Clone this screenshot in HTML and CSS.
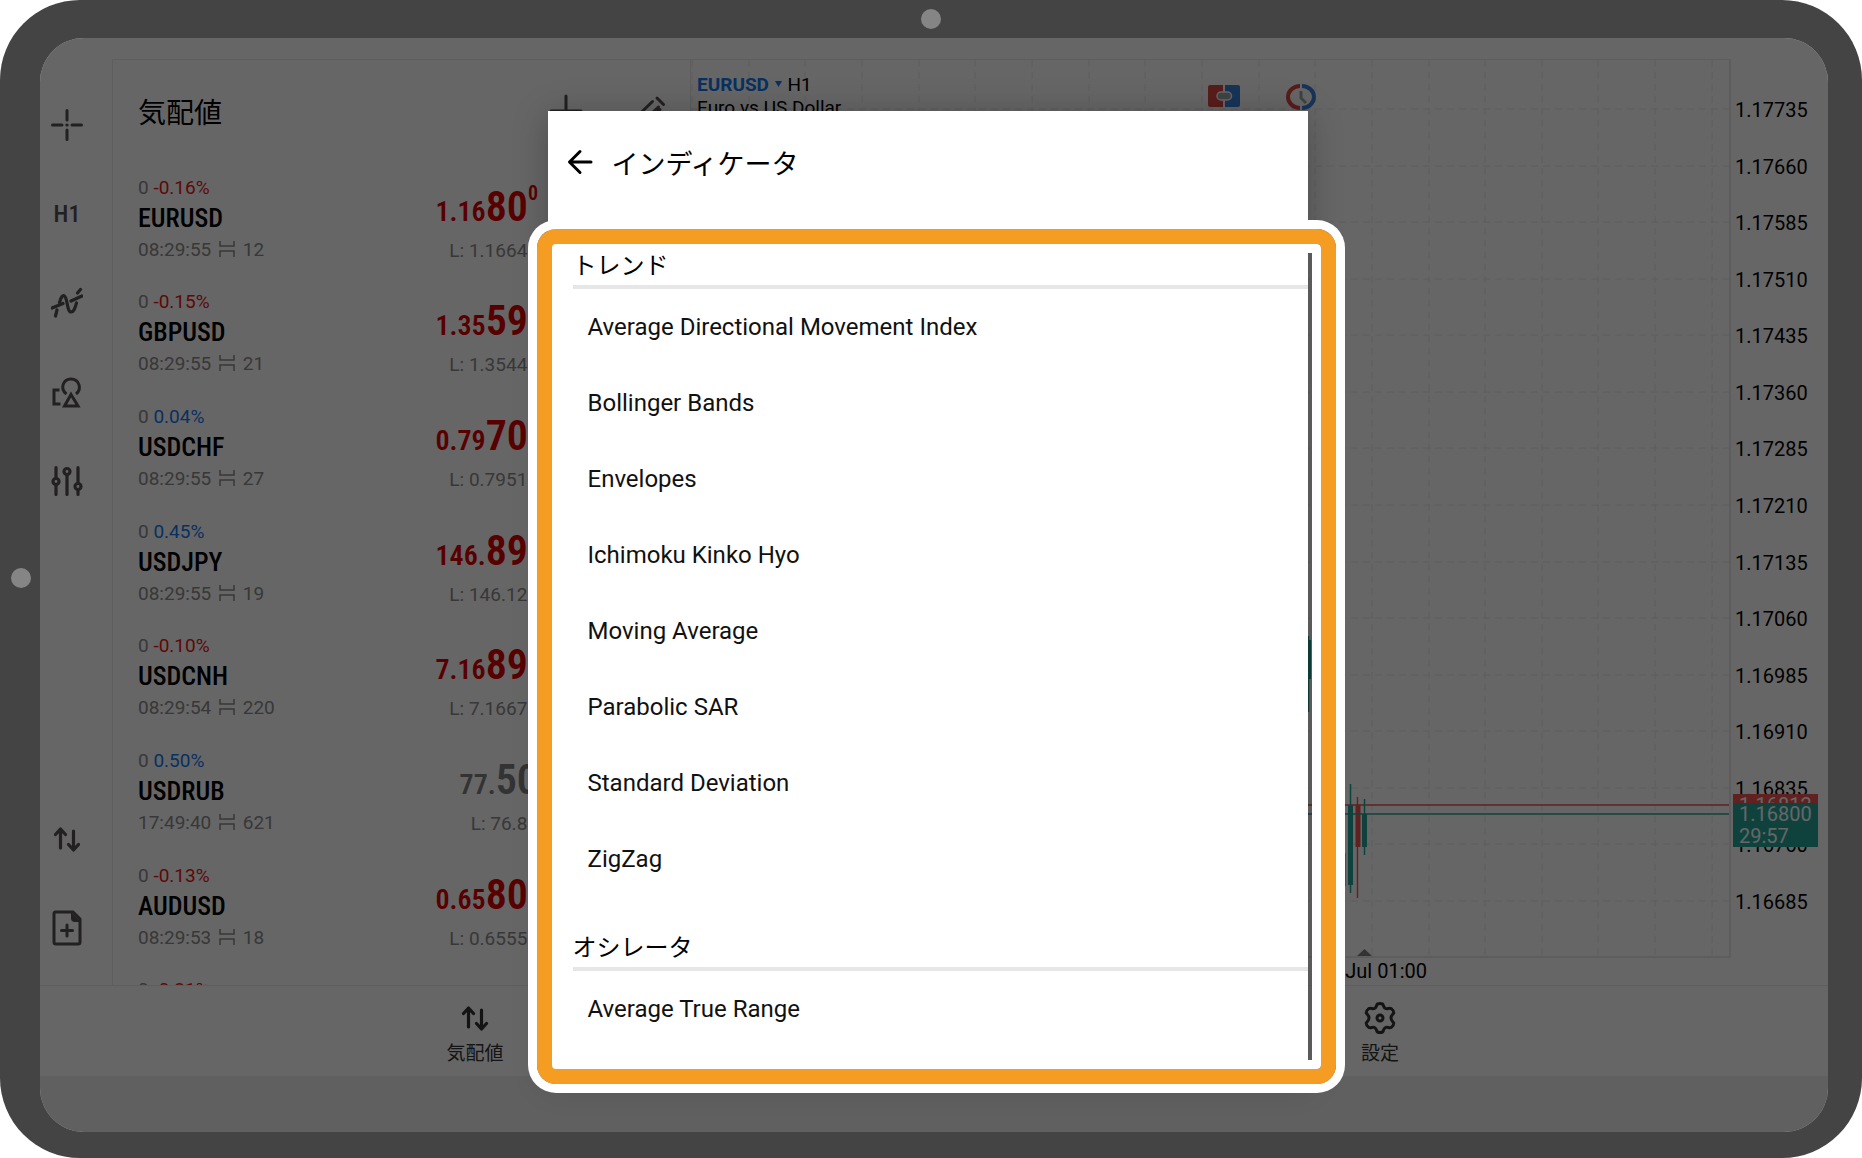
FILE: index.html
```html
<!DOCTYPE html>
<html lang="ja">
<head>
    <meta charset="UTF-8">
    <meta name="viewport" content="width=device-width, initial-scale=1.0">
    <title>インディケータ</title>
    <link rel="stylesheet" href="styles.css">
</head>
<body>

    <!-- 共通アイコン -->
    <svg class="icon-defs" width="0" height="0" aria-hidden="true">
        <symbol id="spread" viewBox="0 0 16 16">
            <path d="M1 0V5H15V0M1 16V10H15V16" fill="none" stroke="currentColor" stroke-width="1.500"/>
        </symbol>
        <symbol id="arrows" viewBox="0 0 32 32">
            <path d="M9.500 25V7M4.500 11.500L9.500 6L14.500 11.500M22.500 8V26M17.500 21.500L22.500 27L27.500 21.500" fill="none" stroke="currentColor" stroke-width="3.200" stroke-linecap="round" stroke-linejoin="round"/>
        </symbol>
    </svg>

    <div class="device">
        <span class="dot dot-top"></span>
        <span class="dot dot-left"></span>

        <div class="screen">
            <main class="main">

                <!-- ツールバー -->
                <div class="toolbar">
                    <button class="tool" aria-label="クロスヘア">
                        <svg class="icon" viewBox="0 0 32 32"><path d="M16 1.500V11M16 21V30.500M1.500 16H11M21 16H30.500M15.800 16H16.200" fill="none" stroke="currentColor" stroke-width="3" stroke-linecap="round"/></svg>
                    </button>
                    <button class="tool tool-text">H1</button>
                    <button class="tool" aria-label="インディケータ">
                        <svg class="icon" viewBox="0 0 32 32"><path d="M1 21L12 16.500M20 14L31 9M4.500 29L6 23M8.500 15.500C10 10 11.500 8 13.500 9C16.500 11 16 25 20 25C23 25 24 21 25.500 16M26.500 6L29.500 2.500" fill="none" stroke="currentColor" stroke-width="3.200" stroke-linecap="round" stroke-linejoin="round"/></svg>
                    </button>
                    <button class="tool" aria-label="オブジェクト">
                        <svg class="icon" viewBox="0 0 32 32"><path d="M15.500 18C8.500 13 12 3 20 3C28 3 31.500 13 25 18M8.500 14H3V28H9.500M20 18.500L13.500 30H27Z" fill="none" stroke="currentColor" stroke-width="3"/></svg>
                    </button>
                    <button class="tool" aria-label="設定">
                        <svg class="icon" viewBox="0 0 32 32"><g fill="none" stroke="currentColor" stroke-width="3.200" stroke-linecap="round"><path d="M5 2.500V12M5 20V29.500M16 10V29.500M27 2.500V17M27 25V29.500"/><circle cx="5" cy="16.500" r="3"/><circle cx="16" cy="6.500" r="3"/><circle cx="27" cy="21.500" r="3"/></g></svg>
                    </button>
                    <button class="tool tool-push" aria-label="気配値">
                        <svg class="icon"><use href="#arrows"/></svg>
                    </button>
                    <button class="tool" aria-label="新規注文">
                        <svg class="icon icon-tall" viewBox="0 0 32 36"><path d="M4.500 2H22L29 9V32Q29 34 27 34H5Q3 34 3 32V4Q3 2 4.500 2Z" fill="none" stroke="currentColor" stroke-width="3"/><path d="M20 2L30 12H24Q20 12 20 8Z" fill="currentColor"/><path d="M16 15V26M10.500 20.500H21.500" fill="none" stroke="currentColor" stroke-width="3" stroke-linecap="round"/></svg>
                    </button>
                </div>

                <!-- 気配値 -->
                <section class="quotes">
                    <header class="quotes-header">
                        <h1>気配値</h1>
                        <button class="tool" aria-label="追加">
                            <svg class="icon icon-large" viewBox="0 0 36 36"><path d="M18 3V33M3 18H33" fill="none" stroke="currentColor" stroke-width="3" stroke-linecap="round"/></svg>
                        </button>
                        <button class="tool" aria-label="編集">
                            <svg class="icon icon-large" viewBox="0 0 36 36"><path d="M25 5L31.500 11.500M20.500 8.500L5 23.500L4 32L13 31L28 16.500M26.500 14L20 20" fill="none" stroke="currentColor" stroke-width="3" stroke-linecap="round" stroke-linejoin="round"/></svg>
                        </button>
                    </header>
                    <ul class="quote-list">
                        <li class="quote">
                            <div>
                                <p class="change">0 <span class="down">-0.16%</span></p>
                                <p class="symbol">EURUSD</p>
                                <p class="meta">08:29:55 <svg class="spread"><use href="#spread"/></svg> 12</p>
                            </div>
                            <div class="quote-price">
                                <p class="price"><span class="price-small">1.16</span>80<sup>0</sup></p>
                                <p class="low">L: 1.16642</p>
                            </div>
                        </li>
                        <li class="quote">
                            <div>
                                <p class="change">0 <span class="down">-0.15%</span></p>
                                <p class="symbol">GBPUSD</p>
                                <p class="meta">08:29:55 <svg class="spread"><use href="#spread"/></svg> 21</p>
                            </div>
                            <div class="quote-price">
                                <p class="price"><span class="price-small">1.35</span>59<sup>1</sup></p>
                                <p class="low">L: 1.35440</p>
                            </div>
                        </li>
                        <li class="quote">
                            <div>
                                <p class="change">0 <span class="up">0.04%</span></p>
                                <p class="symbol">USDCHF</p>
                                <p class="meta">08:29:55 <svg class="spread"><use href="#spread"/></svg> 27</p>
                            </div>
                            <div class="quote-price">
                                <p class="price"><span class="price-small">0.79</span>70<sup>1</sup></p>
                                <p class="low">L: 0.79510</p>
                            </div>
                        </li>
                        <li class="quote">
                            <div>
                                <p class="change">0 <span class="up">0.45%</span></p>
                                <p class="symbol">USDJPY</p>
                                <p class="meta">08:29:55 <svg class="spread"><use href="#spread"/></svg> 19</p>
                            </div>
                            <div class="quote-price">
                                <p class="price"><span class="price-small">146.</span>89<sup>1</sup></p>
                                <p class="low">L: 146.120</p>
                            </div>
                        </li>
                        <li class="quote">
                            <div>
                                <p class="change">0 <span class="down">-0.10%</span></p>
                                <p class="symbol">USDCNH</p>
                                <p class="meta">08:29:54 <svg class="spread"><use href="#spread"/></svg> 220</p>
                            </div>
                            <div class="quote-price">
                                <p class="price"><span class="price-small">7.16</span>89<sup>1</sup></p>
                                <p class="low">L: 7.16670</p>
                            </div>
                        </li>
                        <li class="quote">
                            <div>
                                <p class="change">0 <span class="up">0.50%</span></p>
                                <p class="symbol">USDRUB</p>
                                <p class="meta">17:49:40 <svg class="spread"><use href="#spread"/></svg> 621</p>
                            </div>
                            <div class="quote-price">
                                <p class="price price-idle"><span class="price-small">77.</span>50</p>
                                <p class="low">L: 76.80</p>
                            </div>
                        </li>
                        <li class="quote">
                            <div>
                                <p class="change">0 <span class="down">-0.13%</span></p>
                                <p class="symbol">AUDUSD</p>
                                <p class="meta">08:29:53 <svg class="spread"><use href="#spread"/></svg> 18</p>
                            </div>
                            <div class="quote-price">
                                <p class="price"><span class="price-small">0.65</span>80<sup>1</sup></p>
                                <p class="low">L: 0.65550</p>
                            </div>
                        </li>
                        <li class="quote">
                            <p class="change">0 <span class="down">-0.21%</span></p>
                        </li>
                    </ul>
                </section>

                <!-- チャート -->
                <section class="chart">
                    <div class="plot">
                        <svg class="plot-canvas" viewBox="0 0 1038 896" preserveAspectRatio="none">
                            <path class="grid" d="M1 0V896M58 0V896M114 0V896M171 0V896M228 0V896M284 0V896M341 0V896M398 0V896M454 0V896M511 0V896M568 0V896M624 0V896M681 0V896M738 0V896M794 0V896M851 0V896M907 0V896M964 0V896M1021 0V896"/>
                            <path class="grid" d="M0 49H1038M0 106H1038M0 162H1038M0 219H1038M0 275H1038M0 332H1038M0 388H1038M0 445H1038M0 502H1038M0 558H1038M0 615H1038M0 671H1038M0 728H1038M0 784H1038M0 841H1038"/>
                            <path class="bear" d="M0 745H1038M666.500 737V838" stroke-width="1.400"/>
                            <path class="bear" d="M653.500 793V826" stroke-width="2"/>
                            <path class="bear" d="M667 745V787" stroke-width="5"/>
                            <path class="bull" d="M0 754H1038M617.500 576V652M659.500 724V833M673.500 739V795" stroke-width="1.500"/>
                            <path class="bull" d="M617.500 580V619M659.500 745V825M673.500 754V787" stroke-width="5"/>
                            <path d="M666 896L673.500 889L681 896Z" fill="#808080"/>
                        </svg>
                        <div class="chart-title">
                            <p><b>EURUSD</b> <svg class="caret" viewBox="0 0 9 6"><path d="M1 0H8L4.500 6Z" fill="currentColor"/></svg> H1</p>
                            <p>Euro vs US Dollar</p>
                        </div>
                        <div class="chart-actions">
                            <svg width="34" height="26" viewBox="0 0 34 26"><path d="M16 2H3Q1 2 1 4V22Q1 24 3 24H16Z" fill="#dc4a45"/><path d="M18 2H31Q33 2 33 4V22Q33 24 31 24H18Z" fill="#3b82dc"/><rect x="10" y="9" width="14.500" height="8" rx="4" fill="#9fa8a8" stroke="#fff" stroke-width="1.500"/></svg>
                            <svg width="34" height="28" viewBox="0 0 34 28"><path d="M16 1A14 13 0 0 0 16 27V23A10 9 0 0 1 16 5Z" fill="#dc4a45"/><path d="M18 1A14 13 0 0 1 18 27V23A10 9 0 0 0 18 5Z" fill="#3b82dc"/><path d="M17 8V15L22 20" fill="none" stroke="#9fa8a8" stroke-width="3"/></svg>
                        </div>
                    </div>
                    <div class="price-axis">
                        <span>1.17735</span>
                        <span>1.17660</span>
                        <span>1.17585</span>
                        <span>1.17510</span>
                        <span>1.17435</span>
                        <span>1.17360</span>
                        <span>1.17285</span>
                        <span>1.17210</span>
                        <span>1.17135</span>
                        <span>1.17060</span>
                        <span>1.16985</span>
                        <span>1.16910</span>
                        <span>1.16835</span>
                        <span>1.16760</span>
                        <span>1.16685</span>
                        <div class="tag tag-ask">1.16812</div>
                        <div class="tag tag-bid">1.16800<br>29:57</div>
                    </div>
                    <div class="time-axis">Jul 01:00</div>
                </section>
            </main>

            <nav class="nav">
                <a class="nav-item" href="#">
                    <svg class="icon"><use href="#arrows"/></svg>
                    気配値
                </a>
                <a class="nav-item" href="#">
                    <svg class="icon" viewBox="-16 -16 32 32"><path d="M-2.500 -14Q0 -15 2.500 -14C4 -12 3.500 -10.500 5.500 -9.500C7.500 -8.500 9 -10.500 11.300 -9.400Q13.800 -7.500 13.800 -5C12.500 -3 11 -2.500 11 0C11 2.500 12.500 3 13.800 5Q13.800 7.500 11.300 9.400C9 10.500 7.500 8.500 5.500 9.500C3.500 10.500 4 12 2.500 14Q0 15 -2.500 14C-4 12 -3.500 10.500 -5.500 9.500C-7.500 8.500 -9 10.500 -11.300 9.400Q-13.800 7.500 -13.800 5C-12.500 3 -11 2.500 -11 0C-11 -2.500 -12.500 -3 -13.800 -5Q-13.800 -7.500 -11.300 -9.400C-9 -10.500 -7.500 -8.500 -5.500 -9.500C-3.500 -10.500 -4 -12 -2.500 -14Z" fill="none" stroke="currentColor" stroke-width="3" stroke-linejoin="round"/><circle r="3" fill="none" stroke="currentColor" stroke-width="3"/></svg>
                    設定
                </a>
            </nav>

            <!-- インディケータ選択 -->
            <div class="backdrop">
                <div class="dialog" role="dialog" aria-labelledby="dialog-title">
                    <header class="dialog-header">
                        <button class="back" aria-label="戻る">
                            <svg class="icon" viewBox="0 0 32 32"><path d="M27 16H6M16 5.500L5.500 16L16 26.500" fill="none" stroke="currentColor" stroke-width="3" stroke-linecap="round" stroke-linejoin="round"/></svg>
                        </button>
                        <h2 id="dialog-title">インディケータ</h2>
                    </header>
                    <div class="dialog-body">
                        <h3>トレンド</h3>
                        <ul>
                            <li><button>Average Directional Movement Index</button></li>
                            <li><button>Bollinger Bands</button></li>
                            <li><button>Envelopes</button></li>
                            <li><button>Ichimoku Kinko Hyo</button></li>
                            <li><button>Moving Average</button></li>
                            <li><button>Parabolic SAR</button></li>
                            <li><button>Standard Deviation</button></li>
                            <li><button>ZigZag</button></li>
                        </ul>
                        <h3>オシレータ</h3>
                        <ul>
                            <li><button>Average True Range</button></li>
                        </ul>
                    </div>
                    <div class="highlight"></div>
                </div>
            </div>
        </div>
    </div>

</body>
</html>
```
FILE: styles.css
```css
* {
    box-sizing: border-box;
}
body {
    margin: 0;
    background-color: #fff;
    color: #000;
    font-family: Roboto, "Noto Sans CJK JP", sans-serif;
    font-size: 19px;
}
h1, h2, h3, p, ul {
    margin: 0;
    padding: 0;
    font-weight: 400;
}
ul {
    list-style: none;
}
button {
    padding: 0;
    border: 0;
    background: none;
    color: inherit;
    font: inherit;
    cursor: pointer;
}
.icon-defs {
    position: absolute;
}
.icon {
    display: block;
    width: 32px;
    height: 32px;
}
.icon-tall {
    height: 36px;
}
.icon-large {
    width: 36px;
    height: 36px;
}

/* タブレット本体 */
.device {
    position: relative;
    height: 100vh;
    padding: 38px 34px 26px 40px;
    border-radius: 80px;
    background-color: #444;
}
.dot {
    position: absolute;
    width: 20px;
    height: 20px;
    border-radius: 50%;
    background-color: #858585;
}
.dot-top {
    top: 9px;
    left: calc(50% - 10px);
}
.dot-left {
    top: calc(50% - 11px);
    left: 11px;
}
.screen {
    position: relative;
    display: flex;
    flex-direction: column;
    height: 100%;
    padding: 21px 0 56px;
    border-radius: 44px;
    background: linear-gradient(#fff, #fff) 0 0 / 100% calc(100% - 56px) no-repeat #f0f0f0;
    overflow: hidden;
}
.main {
    flex: 1;
    display: flex;
    min-height: 0;
}

/* ツールバー */
.toolbar {
    display: flex;
    flex-direction: column;
    width: 72px;
    padding: 21px 18px 13px 0;
}
.tool {
    display: flex;
    align-items: center;
    justify-content: center;
    height: 89px;
    color: #555053;
}
.tool-text {
    font-family: "Roboto Condensed", "Liberation Sans Narrow", Roboto, sans-serif;
    font-size: 24px;
    font-weight: 500;
}
.tool-push {
    margin-top: auto;
}

/* 気配値 */
.quotes {
    display: flex;
    flex-direction: column;
    width: 578px;
    border: 1px solid #ebebeb;
    border-width: 1px 0 0 1px;
    overflow: hidden;
}
.quotes-header {
    flex-shrink: 0;
    display: flex;
    align-items: center;
    gap: 48px;
    height: 101px;
    margin-bottom: 13px;
    padding: 0 22px 0 25px;
}
.quotes-header h1 {
    flex: 1;
    font-size: 28px;
}
.quote-list {
    padding: 0 152px 0 25px;
}
.quote {
    display: flex;
    justify-content: space-between;
    height: 115px;
    color: #8c8c8c;
}
.quote:nth-child(3n+1) {
    height: 114px;
}
.change {
    line-height: 28px;
}
.up {
    color: #1478f0;
}
.down {
    color: #eb1414;
}
.symbol {
    color: #000;
    font-family: "Roboto Condensed", "Liberation Sans Narrow", Roboto, sans-serif;
    font-size: 26px;
    font-weight: 500;
    line-height: 32px;
}
.meta {
    line-height: 32px;
}
.spread {
    width: 16px;
    height: 16px;
    margin: 0 3px;
    vertical-align: -1px;
}
.quote-price {
    text-align: right;
}
.price {
    height: 66px;
    color: #dc0000;
    font-family: "Roboto Condensed", "Liberation Sans Narrow", Roboto, sans-serif;
    font-size: 42px;
    font-weight: 600;
    line-height: 66px;
}
.price-small {
    font-size: 28px;
}
.price sup {
    font-size: 20px;
    line-height: 0;
    vertical-align: 21px;
}
.price-idle {
    color: #808080;
}
.low {
    line-height: 22px;
}

/* チャート */
.chart {
    flex: 1;
    display: grid;
    grid-template-columns: 1fr 97px;
    grid-template-rows: 1fr 27px;
}
.plot {
    position: relative;
    border: 1px solid #e8e8e8;
    border-width: 1px 2px 2px 1px;
}
.plot-canvas {
    position: absolute;
    width: 100%;
    height: 100%;
}
.grid {
    fill: none;
    stroke: #e8e8e8;
    stroke-width: 1;
    stroke-dasharray: 7 5;
}
.bear {
    fill: none;
    stroke: #ef5350;
}
.bull {
    fill: none;
    stroke: #26a69a;
}
.chart-title {
    position: absolute;
    top: 13px;
    left: 6px;
    line-height: 23px;
}
.chart-title b {
    color: #1478f0;
}
.caret {
    width: 9px;
    height: 6px;
    vertical-align: 4px;
    color: #1478f0;
}
.chart-actions {
    position: absolute;
    top: 23px;
    right: 411px;
    display: flex;
    gap: 43px;
}
.price-axis {
    position: relative;
    display: flex;
    flex-direction: column;
    justify-content: space-between;
    padding: 39px 0 44px 4px;
    font-size: 20px;
    line-height: 24px;
}
.tag {
    position: absolute;
    left: 2px;
    width: 85px;
    padding-left: 6px;
    color: #fff;
    line-height: 22px;
}
.tag-ask {
    top: 735px;
    background-color: #ef5350;
}
.tag-bid {
    top: 744px;
    background-color: #26a69a;
}
.time-axis {
    padding-right: 304px;
    font-size: 20px;
    line-height: 27px;
    text-align: right;
}

/* ナビゲーション */
.nav {
    display: flex;
    justify-content: space-between;
    height: 91px;
    padding: 16px 388px 0 375px;
    border-top: 1px solid #ebebeb;
}
.nav-item {
    display: flex;
    flex-direction: column;
    align-items: center;
    gap: 6px;
    width: 120px;
    color: #333;
    font-size: 19px;
    line-height: 28px;
    text-decoration: none;
}

/* ダイアログ */
.backdrop {
    position: absolute;
    inset: 0;
    display: flex;
    justify-content: center;
    padding: 73px 13px 56px 0;
    background-color: rgba(0, 0, 0, 0.6);
}
.dialog {
    position: relative;
    display: flex;
    flex-direction: column;
    width: 760px;
    background-color: #fff;
    box-shadow: 0 4px 32px rgba(0, 0, 0, 0.25);
}
.dialog-header {
    display: flex;
    align-items: center;
    gap: 16px;
    height: 104px;
    padding: 0 16px 2px;
}
.dialog-header h2 {
    font-size: 27px;
}
.dialog-body {
    flex: 1;
    min-height: 0;
    overflow: hidden;
}
.dialog-body h3 {
    height: 74px;
    margin-left: 25px;
    padding-top: 39px;
    border-bottom: 4px solid #e6e6e6;
    font-size: 24px;
    line-height: 24px;
}
.dialog-body li button {
    display: block;
    width: 100%;
    height: 76px;
    padding-left: 40px;
    color: #111;
    font-size: 24px;
    text-align: left;
}
.highlight {
    position: absolute;
    top: 118px;
    right: -28px;
    bottom: -8px;
    left: -11px;
    border: 15px solid #f59c23;
    border-radius: 19px;
    box-shadow: 0 0 0 9px #fff, inset 0 0 0 9px #fff;
    pointer-events: none;
}
```
